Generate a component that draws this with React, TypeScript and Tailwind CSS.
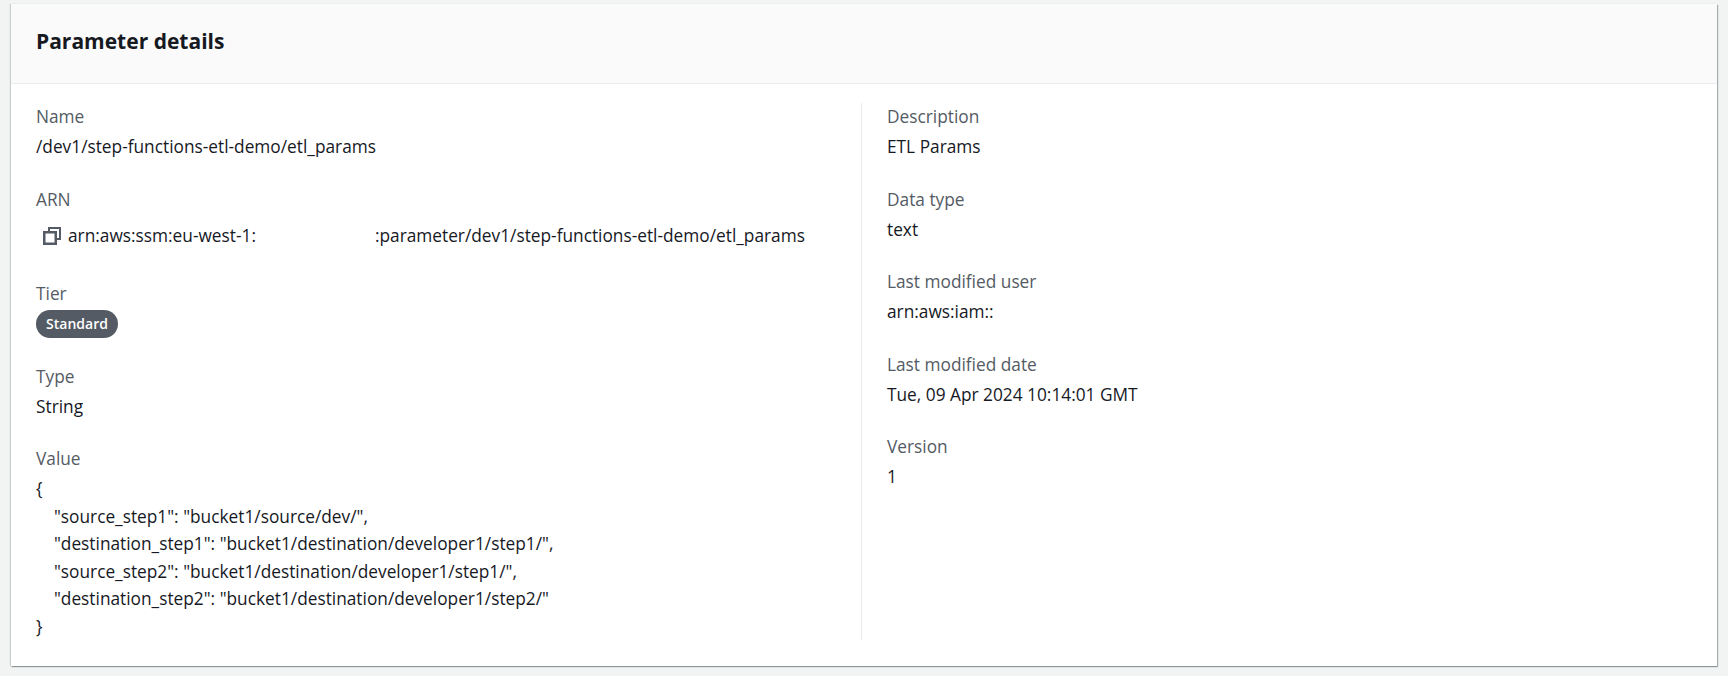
import React from 'react';

const VALUE_LINES = [
  '{',
  '    "source_step1": "bucket1/source/dev/",',
  '    "destination_step1": "bucket1/destination/developer1/step1/",',
  '    "source_step2": "bucket1/destination/developer1/step1/",',
  '    "destination_step2": "bucket1/destination/developer1/step2/"',
  '}',
];

const Field: React.FC<{ label: string; children: React.ReactNode }> = ({ label, children }) => (
  <div>
    <div className="text-[#545b64] mb-[2.5px]">{label}</div>
    <div>{children}</div>
  </div>
);

const App: React.FC = () => {
  return (
    <div className="h-[676px] bg-[#f2f3f3] font-['Open_Sans',sans-serif] text-[17.3px] leading-[27.5px] text-[#16191f] pt-[4px] px-[11px]">
      <div className="h-[662px] bg-white shadow-[1px_1px_1px_0_rgba(0,28,36,0.3),0_1px_1px_0_rgba(0,28,36,0.15),-1px_0_1px_0_rgba(0,28,36,0.15)]">
        <div className="h-[80px] bg-[#fafafa] border-b border-[#eaeded] px-[25px] pb-[4px] flex items-center">
          <h2 className="text-[21px] font-bold">Parameter details</h2>
        </div>
        <div className="flex pt-[19px]">
          <div className="w-[850px] pl-[25px] flex flex-col gap-[25px]">
            <Field label="Name">/dev1/step-functions-etl-demo/etl_params</Field>
            <Field label="ARN">
              <div className="h-[39px] flex items-center pl-[7px] pt-[1px]">
                <svg width="18" height="18" viewBox="0 0 18 18" fill="none" stroke="#545b64" className="mr-[7px]">
                  <path d="M6 5V1h11v11h-4" strokeWidth="2" />
                  <rect x="1.25" y="5.25" width="11.5" height="11.5" strokeWidth="2.5" />
                </svg>
                <span>arn:aws:ssm:eu-west-1:</span>
                <span className="ml-[119px]">:parameter/dev1/step-functions-etl-demo/etl_params</span>
              </div>
            </Field>
            <Field label="Tier">
              <span className="inline-flex h-[28px] w-[82px] items-center justify-center rounded-full bg-[#545b64] text-[14px] font-semibold text-white align-top">Standard</span>
            </Field>
            <Field label="Type">String</Field>
            <Field label="Value">
              {VALUE_LINES.map((line, i) => (
                <div key={i} className="whitespace-pre">{line}</div>
              ))}
            </Field>
          </div>
          <div className="border-l border-[#eaeded] pl-[25px] h-[537px] flex flex-col gap-[25px]">
            <Field label="Description">ETL Params</Field>
            <Field label="Data type">text</Field>
            <Field label="Last modified user">arn:aws:iam::</Field>
            <Field label="Last modified date">Tue, 09 Apr 2024 10:14:01 GMT</Field>
            <Field label="Version">1</Field>
          </div>
        </div>
      </div>
    </div>
  );
};

export default App;
